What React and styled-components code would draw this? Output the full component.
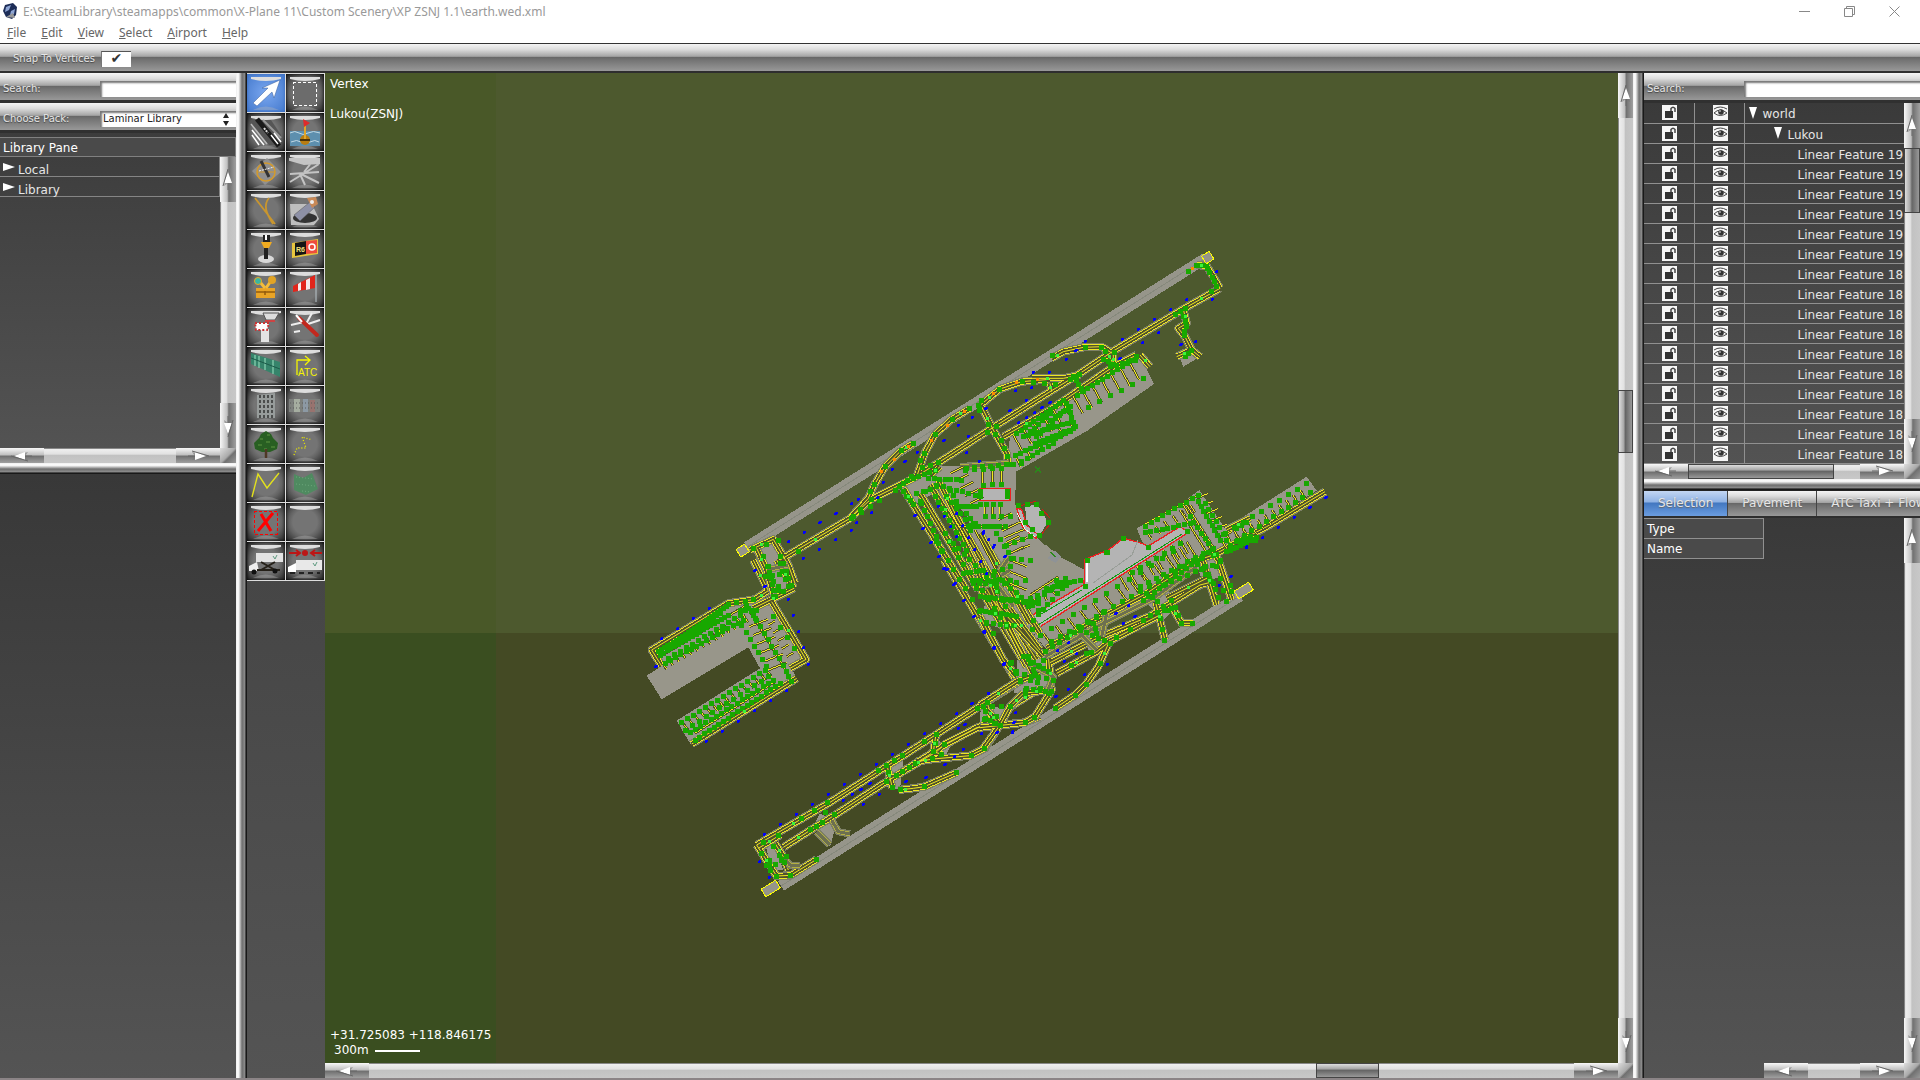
// ----------- SCENERY EDITOR MAIN WINDOW ---------

import React from 'react';
import styled, { createGlobalStyle, css } from 'styled-components';

// ----- style -----

const GlobalStyle = createGlobalStyle`
    * { box-sizing: border-box; }
    body {
        margin: 0;
        overflow: hidden;
        background: #8b8486;
        font-family: "DejaVu Sans", sans-serif;
        font-size: 12px;
        color: #e6e6e6;
    }
    button, input, select { font: inherit; color: inherit; border: 0; padding: 0; margin: 0; }
`
const metal = 'linear-gradient(#f4f4f4 0, #dcdcdc 20%, #a4a4a4 46%, #666 48%, #747474 60%, #989898 100%)';
const panel = 'linear-gradient(#383838, #545454)';

const Window = styled.div`
    height: 100vh;
    display: flex;
    flex-direction: column;
    padding-bottom: 2px;
`
const TitleBar = styled.header`
    height: 22px;
    display: flex;
    align-items: center;
    background: #fff;
    color: #999;
    font-family: "Noto Sans", sans-serif;
    padding: 0 3px;
    gap: 6px;
`
const WindowButtons = styled.div`
    margin-left: auto;
    display: flex;
`
const WindowButton = styled.button`
    width: 45px;
    height: 22px;
    background: none;
    display: grid;
    place-items: center;
`
const MenuBar = styled.nav`
    height: 22px;
    display: flex;
    gap: 15px;
    padding: 2px 7px 0;
    background: #fff;
    border-bottom: 1px solid #333;
    font-family: "Noto Sans", sans-serif;
    line-height: 18px;
    a { color: #666; text-decoration: none; }
`
const OptionBar = styled.div`
    height: 29px;
    display: flex;
    align-items: center;
    gap: 6px;
    padding: 2px 0 0 13px;
    background: ${metal};
    border-bottom: 2px solid #2e2e2e;
    font-size: 10px;
    text-shadow: 0 1px 1px #444;
`
const Tick = styled.input`
    appearance: none;
    width: 30px;
    height: 16px;
    background: #fff;
    border-top: 1px solid #555;
    border-left: 1px solid #777;
    display: flex;
    justify-content: center;
    &:checked::after {
        content: '✔';
        color: #333;
        font-size: 14px;
        line-height: 12px;
    }
`
const Body = styled.div`
    flex: 1;
    min-height: 0;
    display: flex;
`
const Side = styled.aside`
    width: ${p => p.$width}px;
    flex: none;
    display: flex;
    flex-direction: column;
    overflow: hidden;
`
const Splitter = styled.div`
    flex: 0 0 11px;
    background: linear-gradient(${p => p.$across ? 'to bottom' : 'to right'}, #eee 0, #fff 20%, #c8c8c8 35%, #6e6e6e 55%, #8c8c8c 80%, #222 90%, #111);
`
const FieldBar = styled.label`
    height: 30px;
    flex: none;
    display: flex;
    align-items: center;
    padding: 4px 0 0 3px;
    background: ${metal};
    border-bottom: 3px solid #303030;
    font-size: 10px;
    text-shadow: 0 1px 1px #444;
    > span { width: 97px; flex: none; }
`
const field = css`
    flex: 1;
    min-width: 0;
    height: 16px;
    background: #fff;
    color: #222;
    text-shadow: none;
    border-radius: 0;
    box-shadow: inset 2px 2px 2px #777;
    padding: 0 3px;
`
const SearchBox = styled.input`
    ${field}
`
const PackBox = styled.div`
    flex: 1;
    display: flex;
    position: relative;
    svg { position: absolute; right: 7px; top: 2px; }
`
const PackSelect = styled.select`
    ${field}
    appearance: none;
    outline: 0;
`
const UpperPane = styled.section`
    flex: 0 0 ${p => p.$height}px;
    display: flex;
    flex-direction: column;
    background: ${panel};
`
const LowerPane = styled.section`
    flex: 1;
    min-height: 0;
    display: flex;
    flex-direction: column;
    background: ${panel};
`
const PaneTitle = styled.div`
    height: 20px;
    line-height: 20px;
    margin-top: 4px;
    padding-left: 3px;
    background: #4a4a4a;
    border: 1px solid #808080;
    border-left: 0;
    color: #fff;
`
const ScrollGrid = styled.div`
    flex: 1;
    min-height: 0;
    display: grid;
    grid-template-columns: minmax(0, 1fr) ${p => p.$bar || 16}px;
    grid-template-rows: minmax(0, 1fr) 15px;
`
const Content = styled.div`
    overflow: hidden;
    position: relative;
`
const TreeRow = styled.button`
    display: flex;
    align-items: center;
    gap: 3px;
    width: 100%;
    height: 20px;
    padding-left: 3px;
    background: none;
    border-bottom: 1px solid #858585;
    border-right: 1px solid #858585;
    svg { margin-top: 3px; }
    span { padding-top: 6px; }
`
const Track = styled.div`
    display: flex;
    min-width: 0;
    min-height: 0;
    flex-direction: ${p => p.$across ? 'row' : 'column'};
    margin-left: ${p => p.$inset || 0}px;
    background: linear-gradient(${p => p.$across ? 'to bottom' : 'to right'}, #555 0, #eee 10%, #e2e2e2 40%, #c2c2c2 50%, #c8c8c8 100%);
`
const Arrow = styled.button`
    flex: 0 0 ${p => p.$across ? 44 : 45}px;
    overflow: hidden;
    background: linear-gradient(${p => p.$across ? 'to bottom' : 'to right'}, #f8f8f8, #c0c0c0 45%, #707070 55%, #a0a0a0);
    display: flex;
    align-items: center;
    justify-content: center;
    svg { flex: none; transform: rotate(${p => p.$turn}deg); }
`
const Thumb = styled.div`
    flex: ${p => p.$size} 0 0;
    background: linear-gradient(${p => p.$across ? 'to bottom' : 'to right'}, #ddd, #aaa 35%, #666 50%, #999);
    border: 1px solid #444;
`
const Gap = styled.div`
    flex: ${p => p.$size} 0 0;
`
const Corner = styled.div`
    background: linear-gradient(135deg, #ddd, #aaa 50%, #707070 60%, #999);
`
const Tools = styled.div`
    width: 78px;
    flex: none;
    background: ${panel};
`
const ToolGrid = styled.div`
    display: grid;
    grid-template-columns: 1fr 1fr;
    border-top: 1px solid #ddd;
`
const Tool = styled.button`
    height: 39px;
    border-right: 1px solid #ddd;
    border-bottom: 1px solid #ddd;
    background: ${p => p.$active
        ? 'radial-gradient(#7aa7f0, #4479cc)'
        : 'radial-gradient(#747474 45%, #626262 60%, #222)'};
    box-shadow: inset 0 0 3px ${p => p.$active ? '#3568b8' : '#000'};
    svg { display: block; }
`
const MapFrame = styled.main`
    flex: 1;
    min-width: 0;
    display: flex;
`
const MapSvg = styled.svg`
    display: block;
    width: 100%;
    height: 100%;
`
const MapText = styled.div`
    position: absolute;
    left: 5px;
    color: #fff;
    line-height: 15px;
    ${p => p.$bottom ? 'bottom: 5px;' : 'top: 4px;'}
    p { margin: 0 0 ${p => p.$bottom ? 0 : 15}px; }
`
const Scale = styled.p`
    display: flex;
    align-items: center;
    gap: 6px;
    padding-left: 4px;
    &::after { content: ''; width: 45px; height: 2px; background: #fff; }
`
const Table = styled.table`
    width: 100%;
    table-layout: fixed;
    border-collapse: collapse;
    td {
        height: 20px;
        padding: 0;
        border-bottom: 1px solid #909090;
        border-right: 1px solid #909090;
        white-space: nowrap;
        overflow: hidden;
    }
    td:last-child { border-right: 0; }
    td > svg { display: block; margin: 0 auto 0 18px; }
`
const Indent = styled.span`
    display: flex;
    align-items: center;
    gap: 6px;
    padding-left: ${p => p.$depth}px;
    span { padding-top: 3px; }
`
const Tabs = styled.div`
    display: flex;
    height: 28px;
    flex: none;
    border-top: 1px solid #222;
    border-bottom: 2px solid #2e2e2e;
    overflow: hidden;
`
const Tab = styled.button`
    flex: none;
    padding: 0 14px;
    white-space: nowrap;
    border-right: 1px solid #444;
    text-shadow: 0 1px 1px #666;
    background: ${p => p.$active
        ? 'linear-gradient(#c3d6f2, #8fb2e4 44%, #4277c0 48%, #6b9de0)'
        : metal};
`
const Props = styled.table`
    width: 120px;
    border-collapse: collapse;
    th {
        height: 20px;
        padding: 2px 3px 0;
        text-align: left;
        font-weight: normal;
        color: #fff;
        background: #4a4a4a;
        border: 1px solid #909090;
        border-left: 0;
    }
`

// ----- scroll bars -----

const ScrollArrow = ({ turn, label }) => (
    <Arrow $turn={turn} $across={turn % 180 !== 0} aria-label={label}>
        <svg width="14" height="26" viewBox="0 0 14 26">
            <path d="M7 3 L3 19 L7 16 L11 19 Z" fill="#777" opacity=".6" />
            <path d="M7 5 L3 16 L11 16 Z" fill="#fff" />
            <path d="M7 2 L2 19 M7 16 V23" stroke="#666" fill="none" />
        </svg>
    </Arrow>
)
const VScroll = ({ parts = [1] }) => (
    <Track>
        <ScrollArrow turn={0} label="Scroll up" />
        {parts.map((n, i) => i === 1 ? <Thumb key={i} $size={n} /> : <Gap key={i} $size={n} />)}
        <ScrollArrow turn={180} label="Scroll down" />
    </Track>
)
const HScroll = ({ parts = [1], inset }) => (
    <Track $across $inset={inset}>
        <ScrollArrow turn={270} label="Scroll left" />
        {parts.map((n, i) => i === 1 ? <Thumb key={i} $across $size={n} /> : <Gap key={i} $size={n} />)}
        <ScrollArrow turn={90} label="Scroll right" />
    </Track>
)

// ----- tool icons -----

const icons = [
    ['Vertex', <path d="M6 29 L21 14 L15 14 L33 6 L27 24 L25 18 L10 32 Z" fill="#fff" stroke="#3a5f9a" strokeWidth=".5" />],
    ['Marquee', <rect x="7" y="8" width="23" height="23" fill="#6c6c6c" stroke="#fff" strokeDasharray="3 2" shapeRendering="crispEdges" />],
    ['Runway', <g><path d="M4 7 H24 L34 22 V32 H22 L4 12Z" fill="#555" /><path d="M4 11 L20 31" stroke="#bbb" strokeWidth="1.5" /><path d="M16 7 L34 25" stroke="#999" strokeWidth="2" /><path d="M10 6 L32 33" stroke="#1a1a1a" strokeWidth="5" /><path d="M17 15 l4 5" stroke="#ddd" strokeWidth="2" strokeDasharray="2 1" /><path d="M5 22 L12 32 M5 17 L17 32 M24 22 L31 31 M27 20 L34 29" stroke="#fff" strokeWidth="1.5" /></g>],
    ['Sealane', <g><rect x="4" y="18" width="30" height="15" fill="#5d8fae" /><path d="M4 20 q5 -3 9 0 t9 0 t12 0 M5 29 q6 -3 10 0 t9 0 t9 0" stroke="#c0d8e4" fill="none" /><circle cx="19" cy="27" r="5" fill="#b87d12" /><path d="M14 27 H24" stroke="#4c3308" strokeWidth="2" /><path d="M19 12 V26" stroke="#e0a62a" strokeWidth="2" /><path d="M17 6 L24 10 L18 14Z" fill="#e12b2b" /></g>],
    ['Helipad', <g><path d="M20 6 L34 20 L18 33 L5 19Z" fill="#909090" /><circle cx="19" cy="20" r="9" fill="none" stroke="#d39a2c" strokeWidth="1.5" /><path d="M10 20 H28" stroke="#d39a2c" /><path d="M14 9 L22 25" stroke="#333" strokeWidth="3" /><path d="M12 19 L27 15" stroke="#eee" strokeDasharray="2 1" /></g>],
    ['Taxiway', <path d="M4 7 H33 V11 L18 12 L4 8Z M4 22 L33 20 M4 30 L33 12 M14 22 L19 33 M15 22 L33 31 M18 20 L26 10" fill="#c4c4c4" stroke="#c4c4c4" strokeWidth="2" />],
    ['Taxi Line', <path d="M8 7 L28 33 M22 7 C16 14 19 22 26 33" fill="none" stroke="#c9962e" strokeWidth="1.8" />],
    ['Hole', <g><path d="M4 13 L26 13 L33 28 L28 34 H5Z" fill="#bebebe" /><ellipse cx="19" cy="27" rx="12" ry="5" fill="#333" /><path d="M8 24 L24 11 L29 16 L14 30Z" fill="#8d90a6" stroke="#555" strokeWidth=".5" /><path d="M21 7 L30 6 L32 13 L26 17Z" fill="#c88957" /><circle cx="26" cy="11" r="2" fill="#eee" /></g>],
    ['Light Fixture', <g><ellipse cx="19" cy="29" rx="8" ry="4" fill="#d8d8d8" /><path d="M16 5 H23 V12 H16Z" fill="#222" /><path d="M19 5 V10" stroke="#fff" strokeWidth="2" /><path d="M14 12 H25 L22 18 H17Z" fill="#f0ab21" /><path d="M19 18 V29" stroke="#222" strokeWidth="4" /></g>],
    ['Sign', <g><path d="M6 13 L32 9 V24 L6 28Z" fill="#e8c63e" /><path d="M9 13 L20 11 V24 L9 26Z" fill="#151515" /><path d="M20 11 L31 10 V23 L20 24Z" fill="#ee4c3e" /><text x="10" y="22" fontFamily="Liberation Sans, sans-serif" fontSize="7" fontWeight="bold" fill="#f5e17a">R6</text><circle cx="26" cy="17" r="3" fill="none" stroke="#fff" strokeWidth="1.5" /></g>],
    ['Ramp Start', <g><path d="M9 19 H28 V29 H9Z" fill="#e9a426" /><path d="M9 23 H28 M18 22 V26" stroke="#935b0c" strokeWidth="1.5" /><path d="M13 13 L18 19 M24 12 L19 19" stroke="#f4bd3c" strokeWidth="3" /><circle cx="11" cy="12" r="3.5" fill="#39b6a2" stroke="#eca922" /><circle cx="25" cy="11" r="4" fill="#e2a425" /></g>],
    ['Windsock', <g><path d="M30 5 V33" stroke="#b9c5cb" strokeWidth="1" /><path d="M29 6 L7 17 V23 L29 19Z" fill="#e1251b" /><path d="M24 9 L20 11 V21 L24 20Z M15 13 L12 15 V22 L15 21Z" fill="#f4eaea" /></g>],
    ['Tower', <g><path d="M16 5 H32 L28 12 H19Z" fill="#ddd" stroke="#555" /><path d="M18 13 H28" stroke="#c44" strokeWidth="2" /><path d="M14 21 H22 V34 H14Z" fill="#e4e4e4" /><path d="M8 15 H22 L20 22 H9Z" fill="#fff" stroke="#c33" strokeDasharray="2 2" strokeWidth="2" /></g>],
    ['Airport Beacon', <g><path d="M5 17 L18 14 M26 5 L20 16 M22 16 L34 12 M8 24 L14 23" stroke="#eee" strokeWidth="2" /><path d="M13 10 L31 27" stroke="#c2281e" strokeWidth="4" strokeLinecap="round" /><path d="M10 7 L16 14" stroke="#fff" strokeWidth="2" /></g>],
    ['Facade', <g><path d="M4 6 L33 15 V30 L4 17Z" fill="#36846b" /><path d="M8 8 V19 M12 9 V21 M18 11 V23 M26 13 V27" stroke="#7cc4a6" strokeWidth="1.5" /><path d="M4 11 L33 22" stroke="#1d5a49" /></g>],
    ['ATC', <g><path d="M11 28 V13 H24 M19 9 L24 13 L19 18" fill="none" stroke="#f5f500" strokeWidth="1.3" /><text x="12" y="29" fontFamily="Liberation Sans, sans-serif" fontSize="10" fill="#f5f500">ATC</text></g>],
    ['Building', <g><path d="M10 9 L28 7 V32 H10Z" fill="#979c9b" /><path d="M13 9 V32 M17 9 V32 M21 9 V32 M25 9 V32" stroke="#333" strokeWidth="1.5" strokeDasharray="3 2" /></g>],
    ['Autogen', <g><path d="M3 13 H34 V26 H3Z" fill="#7d807d" /><path d="M8 13 H14 V26 H8Z" fill="#a5ada0" /><path d="M17 13 H22 V26 H17Z" fill="#8c99a4" /><path d="M24 14 H29 V26 H24Z" fill="#98736f" /><path d="M4 17 H34 M4 22 H34" stroke="#5c5c5c" strokeDasharray="1 2" /></g>],
    ['Forest', <g><path d="M19 6 L24 9 L26 13 L31 18 L30 24 L23 27 H15 L8 24 L7 18 L12 13 L14 9Z" fill="#285f22" /><path d="M13 14 h3 M20 10 h3 M11 20 h4 M19 17 h4 M24 22 h4 M17 24 h3" stroke="#5e9641" strokeWidth="1" /><path d="M19 24 V33" stroke="#4f3825" strokeWidth="2.5" /></g>],
    ['String', <path d="M8 30 L11 23 L20 23 L18 17 L16 12 L26 15" fill="none" stroke="#e9e900" strokeWidth="1.3" strokeDasharray="1 2" />],
    ['Line', <path d="M5 33 L11 10 L20 24 L32 9" fill="none" stroke="#e2e01d" strokeWidth="1.4" />],
    ['Polygon', <g><path d="M8 10 L17 14 L26 9 L32 25 L20 31 L8 26Z" fill="#4f8a60" /><path d="M10 13 L28 15 M10 20 L29 22 M16 27 L25 28" stroke="#6ba67a" strokeDasharray="1 2" /></g>],
    ['Exclusion', <g><rect x="7" y="8" width="23" height="23" fill="none" stroke="#f00" strokeDasharray="3 2" shapeRendering="crispEdges" /><path d="M14 11 L24 28 M26 10 L11 28" stroke="#f00" strokeWidth="3" /></g>],
    ['Empty', null],
    ['Truck Parking', <g><path d="M9 11 H36 V20 H9Z" fill="#e3e3e3" /><path d="M2 24 L10 20 L12 29 H2Z" fill="#eee" /><path d="M10 28 H33 M14 20 L28 28 M28 20 L14 28" stroke="#252018" strokeWidth="2" /><circle cx="7" cy="30" r="2.5" fill="#111" /><circle cx="28" cy="29" r="2.5" fill="#111" /><path d="M26 14 l2 3 l2 -4" stroke="#5e9a80" fill="none" /></g>],
    ['Truck Destination', <g><path d="M3 11 H14 M10 8 L14 11 L10 14 M36 11 H25 M29 8 L25 11 L29 14" stroke="#bc1616" strokeWidth="2" fill="none" /><circle cx="19" cy="11" r="3" fill="#bc1616" /><path d="M10 18 H36 V28 H10Z" fill="#e8e8e8" /><path d="M2 25 L10 21 V30 H2Z" fill="#fff" /><path d="M4 31 H34" stroke="#222" strokeWidth="2" strokeDasharray="5 4" /><path d="M27 21 l2 3 l2 -4" stroke="#5e9a80" fill="none" /></g>],
]

const ToolIcon = ({ children }) => (
    <svg width="38" height="38" viewBox="0 0 38 38">
        <path d="M4 3 H34 V5 Q19 9 4 5Z" fill="#ddd" />
        <path d="M6 36 Q19 29 32 36Z" fill="#bbb" opacity=".35" />
        {children}
    </svg>
)

// ----- airport drawing: each block is stored in thirds of a pixel from its origin -----

const blocks = [
    {
        origin: [640, 560],
        pavement: [
            '35,270 65,318 20,347 65,418 325,262 360,325 110,482 152,553 470,355 455,325 500,298 395,130 340,115 265,130',
            '385,90 340,0 410,0 462,85 400,130', '375,850 410,870 430,930 395,930',
            '1020,500 1060,440 1110,450 1080,490', '520,800 540,760 590,790 570,860', '1120,400 1130,360 1200,340 1200,400',
            '870,600 890,540 930,560 910,600', '740,680 740,610 790,600 780,690',
        ],
        buildings: [],
        taxi: [
            '350,855 570,727 790,587 1010,445 1130,370 1200,330', '430,862 520,805 590,762 720,677 780,640 830,608 920,552 1010,503 1080,495 1155,487 1200,470',
            '780,640 890,575 915,552 1060,480', '775,690 820,685 853,680 950,638', '830,605 880,597 990,587 1035,565 1080,495 1110,440',
            '740,612 757,683', '888,523 880,575 905,583', '1042,430 1062,490 1080,495',
            '350,855 410,948 452,946 530,898', '405,850 430,890 445,930',
            '395,125 498,298 450,325', '385,92 345,118 265,130 35,270 65,318', '462,85 340,145', '340,0 385,92', '410,0 462,85',
            '1112,440 1200,385', '155,552 470,355', '355,865 420,825', '912,0 1130,365', '970,0 1160,320', '1020,0 1120,190 1190,300', '1065,0 1200,220',
        ],
        faint: ['530,815 570,855', '575,780 595,815 630,822', '430,890 450,915 480,918'],
        lead: [[65, 305, 310, 165, 14, 14, 22], [125, 485, 375, 325, 15, 20, 25], [328, 200, 385, 330, 6, 55, -22], [385, 195, 440, 290, 5, 20, -12], [60, 290, 60, 290, 1, 260, -155], [165, 520, 165, 520, 1, 240, -155], [325, 145, 325, 145, 1, 115, 190]],
        nodes: [[55, 275, 260, 140, 24], [60, 285, 265, 165, 20], [90, 262, 240, 160, 16], [75, 310, 310, 180, 16], [85, 295, 300, 165, 13], [125, 487, 375, 330, 15], [135, 510, 385, 350, 13], [165, 540, 420, 370, 19], [150, 518, 400, 360, 17], [320, 135, 345, 175, 5], [300, 150, 350, 150, 4], [265, 132, 340, 118, 4], [350, 180, 440, 335, 9], [305, 195, 380, 320, 7], [400, 170, 462, 265, 4], [385, 20, 405, 110, 6], [375, 50, 440, 40, 4], [420, 10, 445, 80, 4], [445, 350, 455, 365, 2], [370, 848, 415, 825, 2], [365, 880, 400, 860, 2], [388, 900, 390, 930, 3], [380, 915, 405, 912, 2], [410, 948, 452, 946, 2], [418, 885, 432, 908, 3], [425, 900, 440, 890, 2], [484, 775, 562, 727, 3], [512, 808, 547, 787, 3], [556, 757, 583, 764, 2], [715, 632, 787, 587, 4], [738, 665, 745, 637, 2], [757, 683, 781, 688, 2], [768, 646, 826, 610, 4], [853, 545, 888, 523, 2], [878, 596, 905, 583, 2], [880, 575, 886, 550, 2], [913, 553, 913, 553, 1], [1012, 445, 1042, 428, 2], [1034, 478, 1062, 490, 2], [1035, 455, 1068, 468, 2], [1156, 487, 1183, 472, 2], [994, 587, 1033, 566, 2], [1110, 310, 1142, 360, 3], [1165, 290, 1200, 385, 6], [975, 85, 1060, 220, 5], [1008, 62, 1100, 200, 6], [1060, 45, 1195, 150, 9], [1090, 120, 1195, 130, 6], [950, 638, 950, 638, 1], [853, 680, 853, 680, 1], [529, 898, 529, 898, 1], [1080, 495, 1110, 440, 2]],
        blue: [[65, 235, 208, 145, 4], [48, 320, 48, 320, 1], [200, 543, 440, 392, 6], [445, 117, 505, 312, 5], [373, 823, 950, 461, 13], [996, 430, 1046, 400, 2], [358, 905, 388, 952, 2], [610, 720, 690, 670, 4], [670, 732, 718, 702, 2], [798, 665, 858, 652, 2], [915, 613, 970, 567, 3], [955, 505, 975, 492, 2], [1024, 521, 1118, 514, 3], [912, 25, 1092, 310, 7]],
    },
    {
        origin: [850, 240],
        pavement: [
            '490,700 712,572 912,432 870,345 840,345 780,385 680,460 640,480 480,590 470,680',
            '250,680 500,670 495,785 505,840 610,940 705,990 705,1050 460,1050 430,980 380,860 270,740',
            '985,345 1030,325 1050,350 1000,380', '150,745 210,700 260,690 250,760 190,795', '355,835 470,820 480,980 400,1050 380,1050',
        ],
        buildings: ['388,745 480,745 480,782 388,782', '500,805 515,808 530,855 565,885 558,895 518,862'],
        taxi: [
            '1110,145 1000,207 790,333 690,400 600,455 430,562 270,665 190,715 60,780 0,835', '605,355 640,335 700,322 755,320 795,345',
            '545,415 640,415 690,405', '385,500 450,447 515,425 600,418', '395,500 430,570 470,640 475,670',
            '360,505 305,538 255,583 225,638 200,710', '190,610 150,635 105,680 70,740 55,775 0,835', '460,590 600,510 680,455 790,380 860,345',
            '790,335 790,380', '1040,75 1070,78 1090,110 1110,145', '1000,207 1010,250 985,265 1005,290 1025,330 1050,350', '1025,330 980,350',
            '160,745 190,795 350,1050', '210,760 385,1050', '240,735 330,880 410,1050', '265,720 320,830 440,1040', '600,430 605,455', '760,320 795,380', '870,345 900,380', '270,680 240,705', '1130,870 1200,835',
        ],
        faint: ['330,680 475,670', '480,990 400,1040'],
        lead: [[670, 470, 840, 370, 7, 28, 50], [490, 585, 640, 490, 6, 25, 45], [500, 655, 660, 545, 6, 12, 25], [398, 685, 455, 685, 3, 0, 48], [405, 795, 450, 795, 3, 0, 40], [455, 870, 480, 940, 4, 60, -25], [480, 960, 480, 1030, 3, 50, 20], [890, 875, 1020, 795, 6, 15, 22], [1040, 775, 1110, 890, 6, 35, -15], [810, 1010, 990, 900, 8, 25, 42], [1130, 880, 1200, 850, 4, 10, 25], [300, 700, 360, 790, 5, 40, -20], [330, 860, 330, 860, 1, 130, 0], [375, 870, 375, 870, 1, 90, 170], [880, 855, 880, 855, 1, 165, -90], [1000, 795, 1000, 795, 1, 90, 145], [1040, 780, 1040, 780, 1, 90, 145]],
        nodes: [[1040, 77, 1070, 77, 3], [1072, 85, 1100, 138, 5], [1015, 95, 1085, 153, 2], [975, 223, 1007, 206, 3], [1000, 230, 1010, 258, 3], [1003, 275, 1003, 285, 2], [1006, 350, 1024, 330, 3], [607, 346, 607, 346, 1], [706, 322, 754, 322, 2], [766, 335, 793, 338, 2], [760, 357, 790, 372, 3], [688, 404, 660, 418, 4], [516, 425, 615, 433, 4], [448, 447, 394, 482, 2], [385, 495, 388, 512, 3], [358, 506, 307, 538, 2], [256, 583, 190, 610, 2], [154, 632, 106, 679, 2], [72, 733, 62, 755, 2], [65, 778, 88, 782, 2], [32, 808, 10, 830, 2], [223, 640, 211, 662, 2], [415, 553, 438, 560, 2], [412, 577, 436, 582, 2], [455, 600, 480, 672, 4], [350, 684, 515, 670, 8], [218, 683, 265, 668, 3], [135, 750, 185, 710, 5], [190, 715, 255, 690, 5], [160, 755, 190, 793, 4], [200, 760, 260, 740, 4], [225, 755, 210, 785, 2], [500, 580, 640, 480, 12], [520, 590, 665, 545, 11], [540, 575, 600, 520, 6], [600, 540, 660, 500, 5], [555, 610, 670, 565, 10], [495, 645, 660, 575, 12], [515, 665, 610, 610, 7], [560, 590, 640, 515, 8], [650, 490, 675, 560, 6], [670, 410, 700, 455, 5], [683, 465, 860, 350, 13], [715, 502, 880, 415, 6], [780, 380, 855, 360, 5], [235, 715, 335, 720, 7], [260, 735, 375, 765, 7], [345, 690, 455, 685, 5], [300, 750, 330, 800, 4], [400, 735, 455, 733, 3], [390, 755, 390, 770, 2], [473, 755, 473, 770, 2], [390, 793, 450, 793, 4], [320, 800, 380, 800, 5], [405, 830, 480, 828, 4], [350, 820, 370, 850, 3], [355, 860, 465, 860, 8], [360, 870, 375, 850, 3], [215, 790, 275, 930, 8], [255, 770, 350, 930, 10], [290, 770, 360, 855, 6], [440, 880, 485, 955, 5], [470, 915, 540, 890, 4], [490, 955, 540, 960, 3], [260, 905, 345, 1045, 6], [285, 880, 380, 1045, 8], [310, 910, 440, 1040, 9], [340, 1000, 400, 990, 4], [410, 1003, 480, 980, 4], [370, 1030, 440, 1028, 5], [470, 1030, 525, 1022, 3], [505, 795, 560, 793, 3], [575, 820, 595, 847, 2], [567, 885, 525, 848, 3], [713, 960, 772, 937, 2], [820, 896, 895, 922, 2], [1012, 873, 1012, 873, 1], [885, 858, 1045, 765, 10], [885, 878, 1020, 850, 9], [1045, 785, 1110, 900, 9], [1065, 790, 1130, 900, 7], [1020, 830, 1110, 960, 9], [1160, 905, 1200, 890, 5], [1160, 865, 1190, 848, 3], [848, 998, 990, 910, 7], [870, 1040, 1060, 940, 9], [940, 1035, 1110, 965, 8], [590, 1045, 690, 1020, 7], [620, 1020, 650, 1035, 3], [706, 1040, 706, 1040, 1]],
        blue: [[1100, 95, 1088, 177, 2], [1010, 178, 865, 268, 4], [817, 298, 810, 356, 2], [925, 278, 877, 308, 2], [1037, 304, 993, 313, 2], [650, 357, 706, 304, 3], [550, 397, 598, 397, 2], [497, 452, 545, 442, 2], [480, 510, 530, 480, 2], [505, 548, 600, 488, 5], [408, 505, 325, 556, 3], [355, 588, 282, 602, 2], [350, 638, 388, 663, 2], [202, 637, 127, 688, 3], [100, 727, 65, 818, 3], [20, 848, 25, 778, 2], [195, 825, 315, 1030, 6], [265, 798, 320, 890, 4], [320, 820, 410, 1000, 6], [400, 880, 465, 950, 3], [1190, 920, 1143, 1010, 2]],
        orange: [[95, 695, 175, 620, 3], [245, 600, 343, 514, 3], [430, 460, 500, 428, 2], [562, 419, 562, 419, 1], [1027, 84, 1027, 84, 1]],
    },
    {
        origin: [980, 460],
        pavement: [
            '60,290 200,255 312,360 312,380 160,465 150,505 190,560 0,480',
            '150,505 200,570 700,290 735,262 1010,92 980,50 735,205 658,90 605,130 470,205 495,265',
            '500,430 560,380 590,440 550,480', '640,290 700,260 720,350 670,370', '110,600 190,570 220,690 110,670', '300,510 380,500 395,560 330,580', '0,760 20,720 70,770 60,800 0,800',
        ],
        buildings: ['152,492 156,466 312,374 315,298 385,270 430,235 480,248 505,258 600,200 626,217 168,508'],
        taxi: [
            '200,565 340,485 500,400 640,305 700,285 860,200 1035,95', '210,608 340,540 510,468 660,375 700,365', '230,640 350,575 395,540 540,465 ',
            '690,265 715,300 755,420', '665,290 710,435', '520,400 555,540', '570,430 605,490 640,490', '560,415 690,350', '390,540 355,620 320,670 285,705 225,745',
            '205,590 215,690 165,770 135,788 0,803', '130,700 90,740 60,795 10,865', '0,735 110,665 180,640', '20,750 60,795', '210,690 130,700', '110,650 70,600 0,470', '0,350 160,640', '20,400 190,590', '70,420 180,570', '0,220 100,400 150,490', '0,300 60,450 130,590',
        ],
        faint: ['195,590 350,500 520,415 650,320', '300,520 350,570', '380,460 365,530', '150,610 220,650 200,700', '90,290 40,360 100,440'],
        lead: [[190, 520, 560, 292, 11, 28, 38], [575, 280, 620, 245, 3, 25, 40], [150, 455, 250, 385, 5, -12, -22], [770, 225, 960, 90, 10, 18, 28], [95, 160, 130, 260, 4, -40, 20], [150, 405, 150, 405, 1, 85, -55], [600, 150, 620, 135, 2, 85, 135]],
        nodes: [[180, 525, 580, 275, 13], [215, 545, 640, 305, 17], [195, 575, 370, 458, 9], [160, 480, 260, 370, 8], [145, 440, 255, 355, 8], [130, 425, 235, 380, 6], [490, 420, 700, 265, 14], [500, 400, 565, 450, 5], [510, 465, 575, 445, 4], [540, 475, 553, 540, 3], [575, 420, 605, 490, 4], [637, 490, 637, 490, 1], [640, 300, 700, 370, 6], [665, 295, 715, 412, 6], [700, 285, 740, 425, 5], [750, 375, 753, 395, 2], [740, 275, 830, 232, 10], [770, 245, 825, 240, 5], [735, 220, 980, 70, 10], [750, 255, 990, 98, 12], [300, 510, 390, 550, 6], [340, 490, 350, 520, 3], [360, 610, 335, 577, 2], [320, 673, 287, 706, 2], [226, 745, 226, 745, 1], [275, 615, 320, 580, 2], [410, 533, 490, 480, 3], [130, 590, 205, 635, 6], [95, 608, 135, 690, 4], [110, 640, 220, 660, 6], [150, 660, 190, 600, 4], [140, 685, 215, 695, 5], [208, 700, 135, 703, 2], [10, 740, 90, 740, 4], [15, 775, 60, 797, 4], [136, 787, 163, 772, 2], [12, 865, 12, 865, 1], [0, 410, 110, 420, 8], [0, 450, 110, 470, 8], [20, 490, 100, 495, 5], [40, 370, 75, 440, 4], [0, 360, 90, 360, 5], [380, 278, 430, 235, 2], [505, 263, 622, 213, 2], [317, 378, 322, 300, 2], [158, 507, 158, 507, 1]],
        blue: [[1038, 112, 800, 262, 6], [752, 350, 718, 376, 2], [445, 437, 408, 460, 2], [465, 470, 430, 490, 2], [266, 548, 232, 572, 2], [290, 580, 253, 604, 2], [382, 613, 314, 643, 2], [265, 688, 228, 710, 2], [10, 215, 40, 262, 3], [14, 517, 72, 612, 3], [25, 700, 25, 700, 1], [106, 758, 98, 818, 3]],
    },
    {
        origin: [730, 470],
        pavement: ['80,225 135,205 200,345 130,375 110,300'],
        buildings: [],
        taxi: ['360,145 150,270', '60,240 130,208 175,285 195,340', '80,235 110,300 130,370'],
        faint: ['175,285 110,300'],
        lead: [],
        nodes: [[70, 235, 145, 212, 3], [100, 260, 125, 320, 3], [150, 260, 185, 345, 5], [115, 320, 160, 365, 4], [130, 380, 145, 360, 2], [205, 245, 205, 245, 1], [365, 145, 420, 110, 3]],
        blue: [[175, 215, 365, 100, 5], [220, 265, 365, 180, 4], [75, 300, 105, 350, 2]],
    },
]

// evenly spaced points on a straight run
const spread = ([x1, y1, x2, y2, n]) => Array.from({ length: n }, (_, i) => {
    const t = n > 1 ? i / (n - 1) : 0;
    return [Math.round(x1 + (x2 - x1) * t), Math.round(y1 + (y2 - y1) * t)];
})

const Layer = ({ draw }) => blocks.map((b, i) => (
    <g key={i} transform={`translate(${b.origin.join(' ')}) scale(.33333)`}>{draw(b)}</g>
))
const lines = (list, stroke, strokeWidth) => list.map((p, i) => <polyline key={strokeWidth + stroke + i} points={p} fill="none" stroke={stroke} strokeWidth={strokeWidth} strokeLinejoin="round" />)
const leads = b => b.lead.flatMap(([x1, y1, x2, y2, n, dx, dy]) => spread([x1, y1, x2, y2, n]).map(([x, y]) => [x, y, x + dx, y + dy]))

const EndBox = ({ at, size, turn = -32 }) => (
    <rect x={-size / 2} y="-5" width={size} height="9" transform={`translate(${at}) rotate(${turn})`} fill="#96958a" stroke="#ff0" />
)

const Airport = () => (
    <MapSvg viewBox="325 73 1293 991" preserveAspectRatio="xMinYMin slice" shapeRendering="crispEdges" aria-label="Airport map">
        <rect x="325" y="73" width="171" height="560" fill="#495828" />
        <rect x="496" y="73" width="3000" height="560" fill="#4d592e" />
        <rect x="325" y="633" width="171" height="2000" fill="#3a4e20" />
        <rect x="496" y="633" width="3000" height="2000" fill="#444a24" />

        <path d="M747 547 L1206 258 M781 886 L1240 596" stroke="#96958a" strokeWidth="11" />
        <path d="M747 547 L1206 258 M781 886 L1240 596" stroke="#86897c" strokeWidth="1" />

        <Layer draw={b => b.pavement.map((p, i) => <polygon key={i} points={p} fill="#98968a" />)} />
        <Layer draw={b => b.buildings.map((p, i) => <polygon key={i} points={p} fill="#b4b4b4" stroke="#ee2020" strokeWidth="4" />)} />
        <path d="M1025 507 L1037 504 L1048 522 L1039 536 L1027 524Z" fill="#b4b4b4" />
        <path d="M1020 506 L1036 501 M1042 509 L1050 518 M1050 524 L1041 535" stroke="#c81e14" />
        <Layer draw={b => [...lines(b.taxi, '#7d8065', 25), ...lines(b.taxi, '#eee622', 18), ...lines(b.taxi, '#50522c', 13), ...lines(b.taxi, '#eee622', 3)]} />
        <Layer draw={b => [...lines(b.faint, '#7d8065', 22), ...lines(b.faint, '#b4b040', 14), ...lines(b.faint, '#6d7050', 9)]} />
        <Layer draw={b => leads(b).map(([x1, y1, x2, y2], i) => (
            <g key={i}>
                <path d={`M${x1} ${y1}L${x2} ${y2}`} stroke="#50502a" strokeWidth="8" />
                <path d={`M${x1} ${y1}L${x2} ${y2}`} stroke="#f0ea20" strokeWidth="3" />
            </g>
        ))} />
        <path d="M1038 625 L1182 534 M1038 616 L1082 590" stroke="#0f9a0f" strokeWidth="1" />
        <path d="M1087 582 V561" stroke="#fff" strokeWidth="2" />
        <path d="M1017 513 l8 16 l10 8" stroke="#e8ffe8" strokeWidth="1" fill="none" />
        <path d="M1093 583 L1132 555 L1138 540" stroke="#999e98" fill="none" />
        <Layer draw={b => b.nodes.flatMap(spread).map(([x, y], i) => <rect key={i} x={x - 7} y={y - 7} width="15" height="15" fill="#18a800" />)} />
        <Layer draw={b => b.taxi.map((t, i) => {
            const [a, c] = t.split(' ').map(p => p.split(',').map(Number));
            return <rect key={i} x={(a[0] + c[0]) / 2 - 4} y={(a[1] + c[1]) / 2 - 4} width="9" height="9" fill="#3cf53c" />
        })} />
        <Layer draw={b => b.blue.flatMap(spread).map(([x, y], i) => <path key={i} d={`M${x - 5} ${y + 5}v-6l4 -3h6v6l-3 3z`} fill="#00f" />)} />
        <Layer draw={b => (b.orange || []).flatMap(spread).map(([x, y], i) => <rect key={i} x={x - 5} y={y - 4} width="9" height="9" fill="#ff8a00" />)} />
        <path d="M1047 558 l8 -7 l6 5 l-5 7z" fill="#8f9396" />
        <path d="M1035 467 l6 5 m-6 0 l5 -4 M1051 552 l4 5" stroke="#2a8a1a" strokeWidth="1.5" />
        <EndBox at="1208 258" size={9} />
        <EndBox at="743 551" size={10} />
        <EndBox at="1244 591" size={17} />
        <EndBox at="771 889" size={17} />
    </MapSvg>
)

// ----- small drawings -----

const Lock = () => (
    <svg width="15" height="15" viewBox="0 0 15 15">
        <rect width="15" height="15" fill="#f6f6f6" />
        <rect x="3" y="6" width="8" height="7" fill="#333" />
        <path d="M9 6 V3.500 Q11 1 13 3.500 V7" fill="none" stroke="#444" strokeWidth="1.500" />
    </svg>
)
const Eye = () => (
    <svg width="15" height="15" viewBox="0 0 15 15">
        <rect width="15" height="15" fill="#f6f6f6" />
        <path d="M1 8 Q7 2 14 8 Q7 13 1 8Z M1 4 Q7 0 14 4" fill="none" stroke="#444" />
        <circle cx="8" cy="7" r="2.800" fill="#333" />
        <circle cx="7" cy="6" r=".8" fill="#fff" />
    </svg>
)
const Triangle = ({ open }) => (
    <svg width={open ? 8 : 12} height="12" viewBox={open ? '0 0 8 12' : '0 0 12 12'}>
        <path d={open ? 'M0 0 H8 L4 12Z' : 'M0 1 L12 5 L0 9Z'} fill="#fff" />
    </svg>
)

const features = [...Array(6).fill('Linear Feature 19'), ...Array(10).fill('Linear Feature 18')];
const hierarchy = [
    { name: 'world', depth: 4, open: true },
    { name: 'Lukou', depth: 29, open: true },
    ...features.map(name => ({ name, depth: 53 })),
]

// ----- component -----

const App = () => (
    <>
        <GlobalStyle />
        <Window>
            <TitleBar>
                <svg width="14" height="16" viewBox="0 0 14 16">
                    <path d="M2 2 L10 0 L14 4 L13 12 L9 16 L3 14 L0 8Z" fill="#1d2d57" />
                    <path d="M3 4 L8 2 L6 7 L2 9Z M8 8 L12 6 L11 11 L7 12Z" fill="#8ea5d4" />
                    <path d="M3 14 L10 10 L12 15Z" fill="#999" />
                </svg>
                <span>E:\SteamLibrary\steamapps\common\X-Plane 11\Custom Scenery\XP ZSNJ 1.1\earth.wed.xml</span>
                <WindowButtons>
                    <WindowButton aria-label="Minimize"><svg width="11" height="11" viewBox="0 0 11 11"><path d="M0 5.500 H11" stroke="#888" /></svg></WindowButton>
                    <WindowButton aria-label="Restore"><svg width="11" height="11" viewBox="0 0 11 11"><path d="M.5 2.500 H8.500 V10.500 H.5Z M2.500 2.500 V.5 H10.500 V8.500 H8.500" fill="none" stroke="#888" /></svg></WindowButton>
                    <WindowButton aria-label="Close"><svg width="11" height="11" viewBox="0 0 11 11"><path d="M.5 .5 L10.500 10.500 M10.500 .5 L.5 10.500" stroke="#888" /></svg></WindowButton>
                </WindowButtons>
            </TitleBar>
            <MenuBar>
                {['File', 'Edit', 'View', 'Select', 'Airport', 'Help'].map(m => <a key={m} href="#"><u>{m[0]}</u>{m.slice(1)}</a>)}
            </MenuBar>
            <OptionBar>
                <label htmlFor="snap">Snap To Vertices</label>
                <Tick id="snap" type="checkbox" defaultChecked />
            </OptionBar>
            <Body>
                <Side $width={236}>
                    <UpperPane $height={390}>
                        <FieldBar><span>Search:</span><SearchBox /></FieldBar>
                        <FieldBar>
                            <span>Choose Pack:</span>
                            <PackBox>
                                <PackSelect><option>Laminar Library</option></PackSelect>
                                <svg width="6" height="13" viewBox="0 0 6 13"><path d="M3 0 L6 5 H0Z M3 13 L6 8 H0Z" fill="#222" /></svg>
                            </PackBox>
                        </FieldBar>
                        <PaneTitle>Library Pane</PaneTitle>
                        <ScrollGrid>
                            <Content>
                                <TreeRow><Triangle /><span>Local</span></TreeRow>
                                <TreeRow><Triangle /><span>Library</span></TreeRow>
                            </Content>
                            <VScroll />
                            <HScroll />
                            <Corner />
                        </ScrollGrid>
                    </UpperPane>
                    <Splitter $across />
                    <LowerPane />
                </Side>
                <Splitter />
                <Tools>
                    <ToolGrid>
                        {icons.map(([name, art], i) => (
                            <Tool key={name} $active={i === 0} aria-label={name}><ToolIcon>{art}</ToolIcon></Tool>
                        ))}
                    </ToolGrid>
                </Tools>
                <MapFrame>
                    <ScrollGrid $bar={15}>
                        <Content>
                            <Airport />
                            <MapText>
                                <p>Vertex</p>
                                <p>Lukou(ZSNJ)</p>
                            </MapText>
                            <MapText $bottom>
                                <p>+31.725083 +118.846175</p>
                                <Scale>300m</Scale>
                            </MapText>
                        </Content>
                        <VScroll parts={[273, 61, 568]} />
                        <HScroll parts={[948, 61, 195]} />
                        <Corner />
                    </ScrollGrid>
                </MapFrame>
                <Splitter />
                <Side $width={276}>
                    <UpperPane $height={403}>
                        <FieldBar><span>Search:</span><SearchBox /></FieldBar>
                        <ScrollGrid>
                            <Content>
                                <Table>
                                    <colgroup><col width="50" /><col width="50" /><col /></colgroup>
                                    <tbody>
                                        {hierarchy.map((row, i) => (
                                            <tr key={i}>
                                                <td><Lock /></td>
                                                <td><Eye /></td>
                                                <td><Indent $depth={row.depth}>{row.open && <Triangle open />}<span>{row.name}</span></Indent></td>
                                            </tr>
                                        ))}
                                    </tbody>
                                </Table>
                            </Content>
                            <VScroll parts={[0, 63, 206]} />
                            <HScroll parts={[0, 144, 26]} />
                            <Corner />
                        </ScrollGrid>
                    </UpperPane>
                    <Splitter $across />
                    <LowerPane>
                        <Tabs>
                            <Tab $active>Selection</Tab>
                            <Tab>Pavement</Tab>
                            <Tab>ATC Taxi + Flow</Tab>
                        </Tabs>
                        <ScrollGrid>
                            <Content>
                                <Props>
                                    <tbody>
                                        <tr><th>Type</th></tr>
                                        <tr><th>Name</th></tr>
                                    </tbody>
                                </Props>
                            </Content>
                            <VScroll />
                            <HScroll inset={120} />
                            <Corner />
                        </ScrollGrid>
                    </LowerPane>
                </Side>
            </Body>
        </Window>
    </>
)

export default App;
